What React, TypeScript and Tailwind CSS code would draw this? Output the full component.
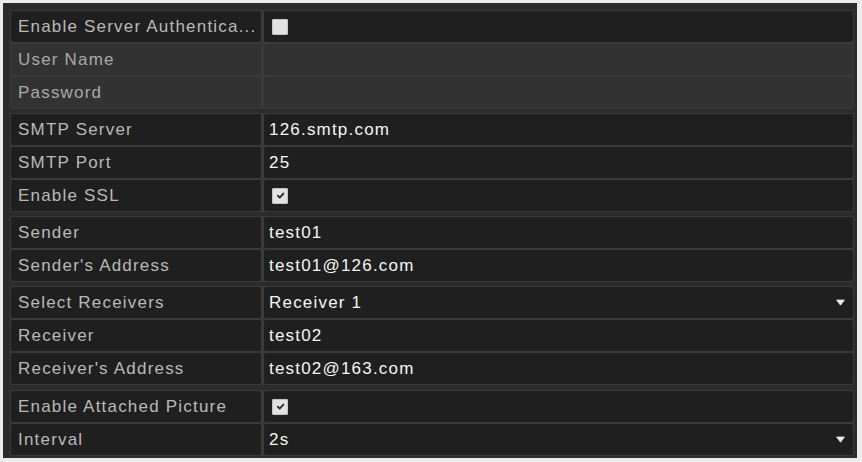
import React from 'react';

type Row = {
  label: string;
  value?: string;
  kind?: 'text' | 'check' | 'select' | 'empty';
  checked?: boolean;
  disabled?: boolean;
};

const groups: Row[][] = [
  [
    { label: 'Enable Server Authentica...', kind: 'check', checked: false },
    { label: 'User Name', kind: 'empty', disabled: true },
    { label: 'Password', kind: 'empty', disabled: true },
  ],
  [
    { label: 'SMTP Server', value: '126.smtp.com' },
    { label: 'SMTP Port', value: '25' },
    { label: 'Enable SSL', kind: 'check', checked: true },
  ],
  [
    { label: 'Sender', value: 'test01' },
    { label: "Sender's Address", value: 'test01@126.com' },
  ],
  [
    { label: 'Select Receivers', value: 'Receiver 1', kind: 'select' },
    { label: 'Receiver', value: 'test02' },
    { label: "Receiver's Address", value: 'test02@163.com' },
  ],
  [
    { label: 'Enable Attached Picture', kind: 'check', checked: true },
    { label: 'Interval', value: '2s', kind: 'select' },
  ],
];

const Checkbox: React.FC<{ checked?: boolean }> = ({ checked }) => (
  <span className="ml-[3px] flex h-[16px] w-[16px] items-center justify-center rounded-[2px] bg-[#e2e2e2] shadow-[inset_0_0_0_1px_#c4c4c4]">
    {checked && (
      <svg viewBox="0 0 10 10" className="h-[9px] w-[9px]">
        <path d="M2 5.2 L4.1 7.3 L8.2 2.8" fill="none" stroke="#2a2a2a" strokeWidth="2" strokeLinecap="round" strokeLinejoin="round" />
      </svg>
    )}
  </span>
);

const Caret = () => (
  <svg viewBox="0 0 9 7" className="h-[7px] w-[9px]">
    <path d="M0.6 1 L8.4 1 L4.5 6.2 Z" fill="#e8e8e8" strokeLinejoin="round" stroke="#e8e8e8" strokeWidth="0.8" />
  </svg>
);

const FormRow: React.FC<{ row: Row }> = ({ row }) => {
  const cell = row.disabled ? 'bg-[#323232]' : 'bg-[#1f1f1f]';
  return (
    <div className="flex h-[31px] gap-[3px]">
      <div className={`flex w-[250px] items-center rounded-[2px] pl-[7px] ${cell} ${row.disabled ? 'text-[#a9a9a9]' : 'text-[#b9b9b9]'}`}>
        {row.label}
      </div>
      <div className={`flex flex-1 items-center justify-between rounded-[2px] pl-[5px] pr-[8px] text-[#f5f5f5] ${cell}`}>
        {row.kind === 'check' ? <Checkbox checked={row.checked} /> : <span>{row.value}</span>}
        {row.kind === 'select' && <Caret />}
      </div>
    </div>
  );
};

export default function App() {
  return (
    <div className="h-[462px] w-[862px] bg-[#ececec] pb-[4px] pl-[3px] pr-[5px] pt-[3px]">
      <div
        className="flex h-full flex-col gap-[4px] bg-[#2b2b2b] pl-[7px] pr-[3px] pt-[7px] text-[17px] tracking-[1.2px]"
        style={{ fontFamily: '"Liberation Sans", Arial, sans-serif' }}
      >
        {groups.map((g, i) => (
          <div key={i} className={`flex flex-col gap-[2px] rounded-[2px] bg-[#3a3a3a] p-[1px] ${i === 4 ? 'mt-[1px]' : ''}`}>
            {g.map((r) => (
              <FormRow key={r.label} row={r} />
            ))}
          </div>
        ))}
      </div>
    </div>
  );
}
